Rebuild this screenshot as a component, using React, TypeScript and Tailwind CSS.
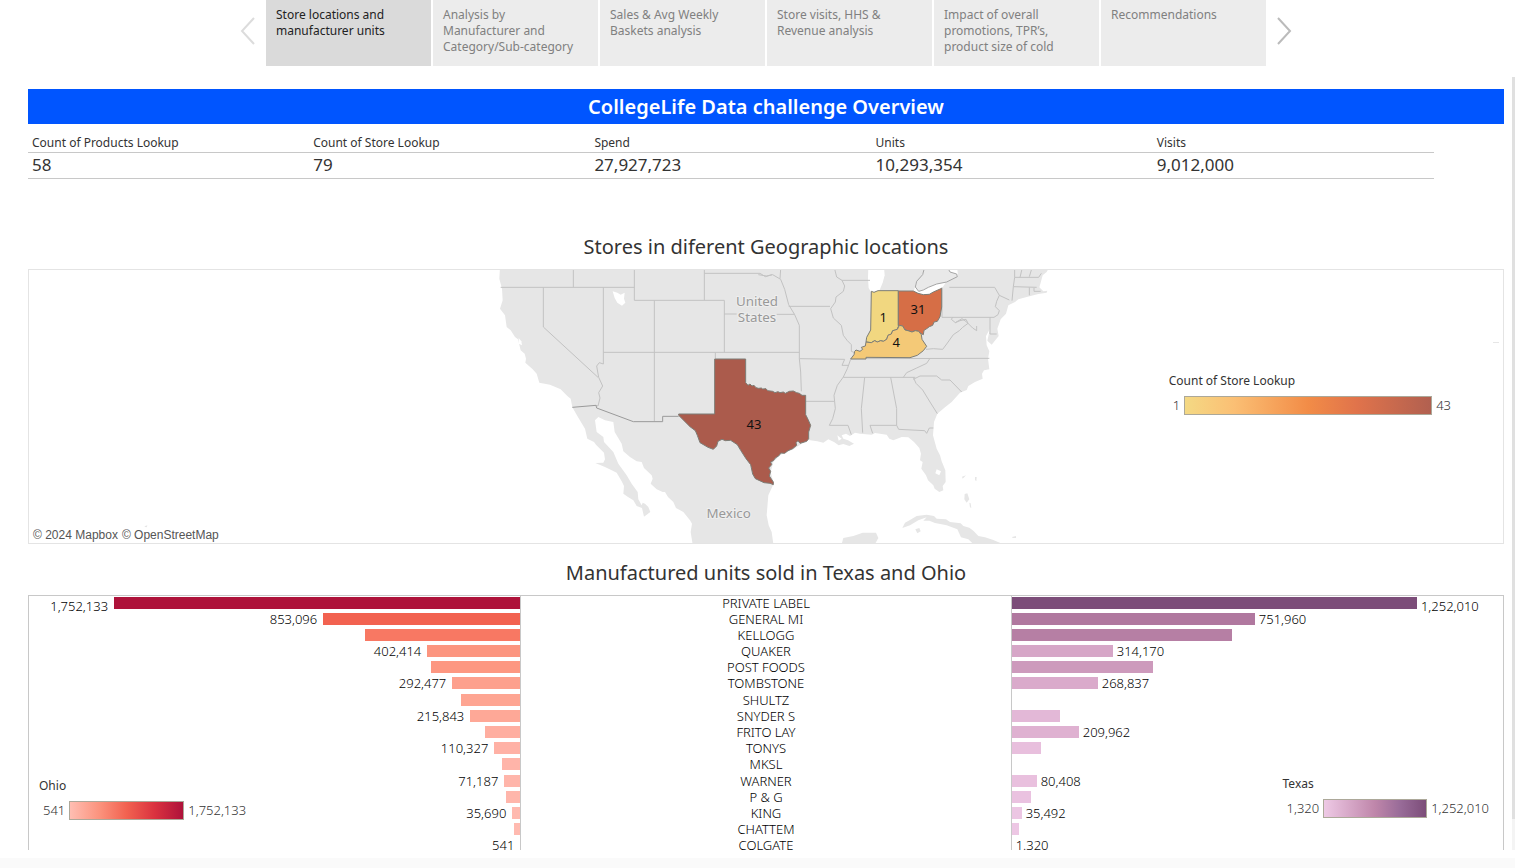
import React from "react";

const tabs = [
  "Store locations and manufacturer units",
  "Analysis by Manufacturer and Category/Sub-category",
  "Sales & Avg Weekly Baskets analysis",
  "Store visits, HHS & Revenue analysis",
  "Impact of overall promotions, TPR’s, product size of cold",
  "Recommendations",
];

const totals = [
  ["Count of Products Lookup", "58"],
  ["Count of Store Lookup", "79"],
  ["Spend", "27,927,723"],
  ["Units", "10,293,354"],
  ["Visits", "9,012,000"],
];

type Bar = { size: number; color: string; label?: string };
type Row = { name: string; ohio: Bar; texas: Bar };

const bar = (size: number, color: string, label?: string): Bar => ({ size, color, label });

const rows: Row[] = [
  { name: "PRIVATE LABEL", ohio: bar(406, "#ae123a", "1,752,133"), texas: bar(405, "#7c4d79", "1,252,010") },
  { name: "GENERAL MI", ohio: bar(197, "#f26250", "853,096"), texas: bar(243, "#b0789f", "751,960") },
  { name: "KELLOGG", ohio: bar(155, "#f87863"), texas: bar(220, "#b67fa4") },
  { name: "QUAKER", ohio: bar(93, "#fc957f", "402,414"), texas: bar(101, "#d6a6c7", "314,170") },
  { name: "POST FOODS", ohio: bar(89, "#fd9781"), texas: bar(141, "#cd9abc") },
  { name: "TOMBSTONE", ohio: bar(68, "#fda08d", "292,477"), texas: bar(86, "#daaacb", "268,837") },
  { name: "SHULTZ", ohio: bar(59, "#fea592"), texas: bar(0, "#eec9e5") },
  { name: "SNYDER S", ohio: bar(50, "#fea897", "215,843"), texas: bar(48, "#e3b8d7") },
  { name: "FRITO LAY", ohio: bar(35, "#ffaea0"), texas: bar(67, "#dfb1d1", "209,962") },
  { name: "TONYS", ohio: bar(26, "#ffb1a5", "110,327"), texas: bar(29, "#e8bfdd") },
  { name: "MKSL", ohio: bar(18, "#ffb4a9"), texas: bar(0, "#eec9e5") },
  { name: "WARNER", ohio: bar(16, "#ffb5aa", "71,187"), texas: bar(25, "#e9c0de", "80,408") },
  { name: "P & G", ohio: bar(14, "#ffb6ab"), texas: bar(19, "#eac2e0") },
  { name: "KING", ohio: bar(8, "#ffb9af", "35,690"), texas: bar(10, "#ecc6e3", "35,492") },
  { name: "CHATTEM", ohio: bar(6, "#ffbab0"), texas: bar(7, "#edc7e4") },
  { name: "COLGATE", ohio: bar(0, "#ffbeb2", "541"), texas: bar(0, "#eec9e5", "1.320") },
];

const pct = (n: number) => `${(n / 491) * 100}%`;

function Legend({ title, min, max, swatch }: { title: string; min: string; max: string; swatch: string }) {
  return (
    <div className="text-[#333]">
      <div className="text-xs leading-4">{title}</div>
      <div className="mt-[7px] flex items-center gap-1 pl-1 text-[13px] leading-4 font-light">
        <span>{min}</span>
        <span className={`h-[19px] border border-[#aca899] ${swatch}`} />
        <span>{max}</span>
      </div>
    </div>
  );
}

function StoreMap() {
  return (
    <svg
      viewBox="-1383 24 4422 819"
      preserveAspectRatio="xMidYMid slice"
      className="block h-full w-full"
      role="img"
      aria-label="Count of stores by state"
    >
      <g fill="#e6e6e6">
        <path d="M30 15L28 50L36 80L38 115L30 140L45 160L50 195L62 205L75 225L84 232L92 265L104 275L108 290L106 302L128 322L140 335L148 362L180 368L212 382L232 402L242 410L247 436L262 462L285 500L292 530L312 540L318 548L342 572L345 592L340 602L316 603L345 615L365 625L380 632L395 658L402 672L400 695L414 705L430 715L440 732L456 738L462 764L481 750L475 735L465 725L458 722L455 730L445 712L443 690L425 665L410 640L385 605L370 570L342 540L340 525L320 510L315 475L325 465L345 475L370 480L374 510L395 545L400 568L420 585L440 598L455 600L462 618L485 640L488 650L482 665L500 682L518 690L525 690L534 705L550 720L558 738L580 750L600 775L606 785L602 810L610 860H814V15Z" />
        <g transform="translate(810 0)">
          <path d="M-20 15H868L860 30L848 40L842 62L838 76L850 88L862 86L860 92L835 96L800 105L775 112L765 120L745 130L738 155L722 172L712 200L716 222L695 248L682 236L690 200L678 222L680 250L688 268L684 290L688 322L672 325L666 335L668 350L645 360L625 372L620 384L600 392L575 420L555 436L532 455L522 480L519 520L530 560L540 580L545 598L556 625L557 660L548 672L550 685L538 690L524 680L520 670L504 655L498 640L484 620L488 600L480 595L483 575L478 558L462 540L445 526L425 525L400 535L388 530L380 518L345 513L335 518L300 515L285 512L270 522L258 515L245 520L250 530L264 535L282 545L268 552L250 546L236 550L222 540L205 532L190 542L172 538L145 534L125 545L100 562L60 580L40 600L32 630L41 665L25 700L20 760L26 790L35 810L42 860H-20Z" />
          <path d="M245 846L250 828L280 822L308 812L348 812L355 828L345 846Z" />
          <path d="M427 798L435 782L450 774L470 762L500 758L522 762L530 770L558 772L570 780L602 784L610 792L628 797L640 806L655 822L675 826L700 834L728 846L640 846L625 832L603 826L592 802L560 790L525 783L508 776L490 776L500 766L475 775L450 790Z" />
          <path d="M466 802L478 798L482 808L472 814Z" />
          <path d="M614 696L622 694L628 712L620 722L613 712ZM628 722L632 724L634 738L630 736ZM606 644L618 640L608 650ZM645 645L650 645L649 658L645 654ZM756 825L768 822L768 828L758 828Z" />
        </g>
        <path d="M3009 240H3027V243H3009ZM-1037 793L-1028 790L-1030 798Z" />
      </g>

      <g fill="#fff">
        <path d="M368 88L382 92L392 98L404 92L402 110L406 122L396 131L382 122L374 108Z" />
        <path d="M86 228L94 238L96 250L86 245Z" />
        <g transform="translate(810 0)">
          <path d="M325 15L372 15L374 40L368 62L358 86L334 92L326 78L324 48Z" />
          <path d="M416 87L462 86L468 62L480 55L490 30L494 22L592 22L594 42L560 58L545 80L520 94L480 98L440 90Z" />
          <path d="M530 622L543 628L538 640L526 634ZM232 520L245 530L236 536Z" />
        </g>
      </g>
      <path transform="translate(810 0)" d="M494 15L488 38L470 58L466 75L476 88L490 84L505 76L530 66L560 60L592 44L590 36L570 30L562 15Z" fill="#e9e9e9" stroke="#a5a5a5" strokeWidth="3" />

      <g fill="none" stroke="#c2c2c2" strokeWidth="3">
        <path d="M32 76H433M250 20V76M433 20V115H703V271M643 115V20M160 76V195L324 346M340 76V306L328 302L320 312L326 346L338 372L326 392L330 408L324 432L318 430M340 271H810M493 115V478M676 271V290M703 156H740M643 34H810L826 44L846 38" />
        <g transform="translate(810 0)">
          <path d="M-5 38L20 42L38 38L62 52L74 82L86 128L104 158L118 190V290L122 330L124 388M50 157H104M86 133H210M0 271H118M62 21L60 50M118 290L254 292L246 310H264" />
          <path d="M224 21L230 45L246 55L254 72L250 88L228 105L226 120L212 140L220 168L244 190L250 220L262 236L274 248V268L284 272M246 55H330" />
          <path d="M272 292L262 320L250 345L232 370L222 400L226 440L218 470L208 490H264L274 518M136 418H222M250 346H466M272 290L688 289M510 289L500 304L470 318L440 332L430 346M314 346L304 440L308 512M392 346L410 440L410 490H330L338 514M410 490L416 502L494 506L500 514L508 498H520M460 346L468 364L488 384L510 420L532 455M460 352L480 342H530L545 354H570L605 390" />
          <path d="M546 76V166H702L714 158L718 146L706 134L710 118L718 100L704 76H568M718 100L748 114M498 262L520 260L548 262L560 246L580 218L598 206L608 196L624 184L618 172L600 176L586 182L574 172L578 166M586 182L606 170L620 180L638 198L650 206L650 192M690 166V216H710M756 116L760 74L764 46V21M760 74L830 76M808 76V100M764 46H836L844 34M786 21L780 46M815 21L808 44M822 78V88H842" />
        </g>
      </g>
      <path d="M247 436L318 430L320 438L430 479H518V463H566" fill="none" stroke="#9a9a9a" strokeWidth="3" />

      <g stroke="#7d7d76" strokeWidth="3" strokeLinejoin="round">
        <path fill="#ab5b4c" d="M674 291H767V362L774 370L780 366L786 372L792 370L798 377L806 379L814 378L818 381L828 380L833 386L848 388L855 392L864 389L870 392L880 390L886 394L898 388L910 387L920 392L928 394L936 400L947 400V458L954 472L962 490L956 510L956 530L950 538L930 544L924 536L918 542L920 550L908 560L894 566L884 574L872 573L868 580L856 588L850 596L842 600L845 608L836 618L842 628L838 642L850 660L850 668L840 664L822 662L796 650L788 636L782 608L768 590L752 565L742 548L722 535L706 536L696 532L684 538L680 552L670 562L654 556L630 542L622 520L616 506L600 494L566 460V456H674Z" />
        <g transform="translate(810 0)">
          <path fill="#f1d780" d="M334 88L342 91L354 86H415V194L410 204L398 206L394 216L384 220L380 232L370 238L362 236L352 240L344 236L334 242L318 240L320 226L332 204Z" />
          <path fill="#d66e46" d="M415 87H460L474 94L490 98L508 97L520 90L545 79V135L540 164L532 178L522 180L518 190L508 194L500 200L492 205L490 218L482 214L476 208L466 206L456 210L444 206L435 204L428 192L415 190Z" />
          <path fill="#f4c977" d="M272 291L282 278L284 268L288 264L300 268L308 262L304 256L316 252L318 240L334 242L344 236L352 240L362 236L370 238L380 232L384 220L394 216L398 206L412 202L418 190L428 192L435 204L444 206L456 210L466 206L476 208L484 218L486 232L500 253L490 266L472 280L450 287L318 286V291Z" />
        </g>
      </g>

      <g fontSize="39" textAnchor="middle" fill="#111">
        <text x="1180" y="180">1</text>
        <text x="1284" y="156">31</text>
        <text x="1219" y="256">4</text>
        <text x="792" y="501">43</text>
      </g>
      <g fontSize="40" textAnchor="middle" fill="#999" stroke="#eee" strokeWidth="6" paintOrder="stroke">
        <text x="801" y="131">United</text>
        <text x="801" y="179">States</text>
        <text x="716" y="767">Mexico</text>
      </g>
    </svg>
  );
}

function Arrow({ d, label, tone }: { d: string; label: string; tone: string }) {
  return (
    <button type="button" aria-label={label} className={`flex h-[62px] w-9 items-center justify-center ${tone}`}>
      <svg width="16" height="28" viewBox="0 0 16 28" fill="none" stroke="currentColor" strokeWidth="2">
        <path d={d} />
      </svg>
    </button>
  );
}

export default function App() {
  return (
    <div className="flex h-screen flex-col overflow-hidden bg-white font-['Noto_Sans','Open_Sans',sans-serif] text-[#333]">
      <div className="flex min-h-0 flex-1">
        <main className="flex min-w-0 flex-1 flex-col pr-2 pl-7">
          <nav aria-label="Story points" className="flex shrink-0 items-start justify-center">
            <Arrow d="M14 1L2 14L14 27" label="Previous" tone="text-[#dcdcdc]" />
            <div className="flex gap-0.5">
              {tabs.map((t, i) => (
                <button
                  key={t}
                  type="button"
                  className={`flex h-[66px] w-[165px] items-start pt-[7px] pr-4 pl-2.5 text-left text-xs leading-4 ${
                    i === 0 ? "bg-[#dadada] text-[#222]" : "bg-[#ececec] text-[#808080]"
                  }`}
                >
                  {t}
                </button>
              ))}
            </div>
            <Arrow d="M2 1L14 14L2 27" label="Next" tone="text-[#bbb]" />
          </nav>

          <h1 className="mt-[23px] h-[35px] shrink-0 bg-[#0055ff] text-center text-xl leading-9 font-semibold text-white">
            CollegeLife Data challenge Overview
          </h1>

          <table className="mt-2.5 w-[calc(100%-70px)] shrink-0 table-fixed border-collapse text-left">
            <thead>
              <tr className="border-b border-[#c8c8c8]">
                {totals.map(([name]) => (
                  <th key={name} className="h-[18px] px-1 text-xs leading-4 font-normal">
                    {name}
                  </th>
                ))}
              </tr>
            </thead>
            <tbody>
              <tr className="border-b border-[#c8c8c8]">
                {totals.map(([name, value]) => (
                  <td key={name} className="h-[26px] px-1 text-[17px] leading-6">
                    {value}
                  </td>
                ))}
              </tr>
            </tbody>
          </table>

          <h2 className="mt-14 shrink-0 text-center text-xl leading-6">Stores in diferent Geographic locations</h2>
          <section className="relative mt-[10px] h-[275px] shrink-0 border border-[#e4e4e4]">
            <StoreMap />
            <div className="absolute top-[103px] right-[52px]">
              <Legend
                title="Count of Store Lookup"
                min="1"
                max="43"
                swatch="w-[248px] bg-[linear-gradient(90deg,#f4d984,#fbbf74_20%,#f28c47_50%,#e0734b_70%,#b16050)]"
              />
            </div>
            <div className="absolute bottom-0 left-0 flex gap-1 bg-white/80 px-1 font-['Liberation_Sans',sans-serif] text-xs leading-4 text-[#555]">
              <a href="#mapbox">© 2024 Mapbox</a>
              <a href="#osm">© OpenStreetMap</a>
            </div>
          </section>

          <h2 className="mt-[17px] shrink-0 text-center text-xl leading-6">Manufactured units sold in Texas and Ohio</h2>
          <section className="relative mt-[10px] min-h-0 flex-1 border-x border-t border-[#c8c8c8]">
            <div className="pointer-events-none absolute inset-y-0 left-1/3 w-1/3 border-x border-[#c8c8c8]" />
            <div className="grid h-[259px] auto-rows-fr">
              {rows.map((r, i) => {
                const label = i === 0 ? "self-start leading-[18px]" : "leading-3";
                return (
                  <div key={r.name} className="grid grid-cols-3 pt-px text-[13px]">
                    <div className="flex h-3 items-center justify-end gap-1.5 font-light text-black">
                      {r.ohio.label && <span className={label}>{r.ohio.label}</span>}
                      <span className="h-3" style={{ width: pct(r.ohio.size), background: r.ohio.color }} />
                    </div>
                    <div className="text-center leading-3 font-light text-black">{r.name}</div>
                    <div className="flex h-3 items-center gap-1 font-light text-black">
                      <span className="h-3" style={{ width: pct(r.texas.size), background: r.texas.color }} />
                      {r.texas.label && <span className={label}>{r.texas.label}</span>}
                    </div>
                  </div>
                );
              })}
            </div>
            <div className="absolute top-[182px] left-2.5">
              <Legend
                title="Ohio"
                min="541"
                max="1,752,133"
                swatch="w-[115px] bg-[linear-gradient(90deg,#ffbeb2,#fb917b_27%,#f26250_50%,#da323f_75%,#ae123a)]"
              />
            </div>
            <div className="absolute top-[180px] right-3.5">
              <Legend
                title="Texas"
                min="1,320"
                max="1,252,010"
                swatch="w-[104px] bg-[linear-gradient(90deg,#eec9e5,#bf86aa_50%,#986b98_75%,#7c4d79)]"
              />
            </div>
          </section>
        </main>
        <div className="mt-[77px] flex w-[3px] flex-col bg-[#f4f4f4]">
          <div className="h-[96%] bg-[#e0e0e0]" />
        </div>
      </div>
      <footer className="h-[18px] shrink-0 border-t-8 border-white bg-[#fafafa]" />
    </div>
  );
}
